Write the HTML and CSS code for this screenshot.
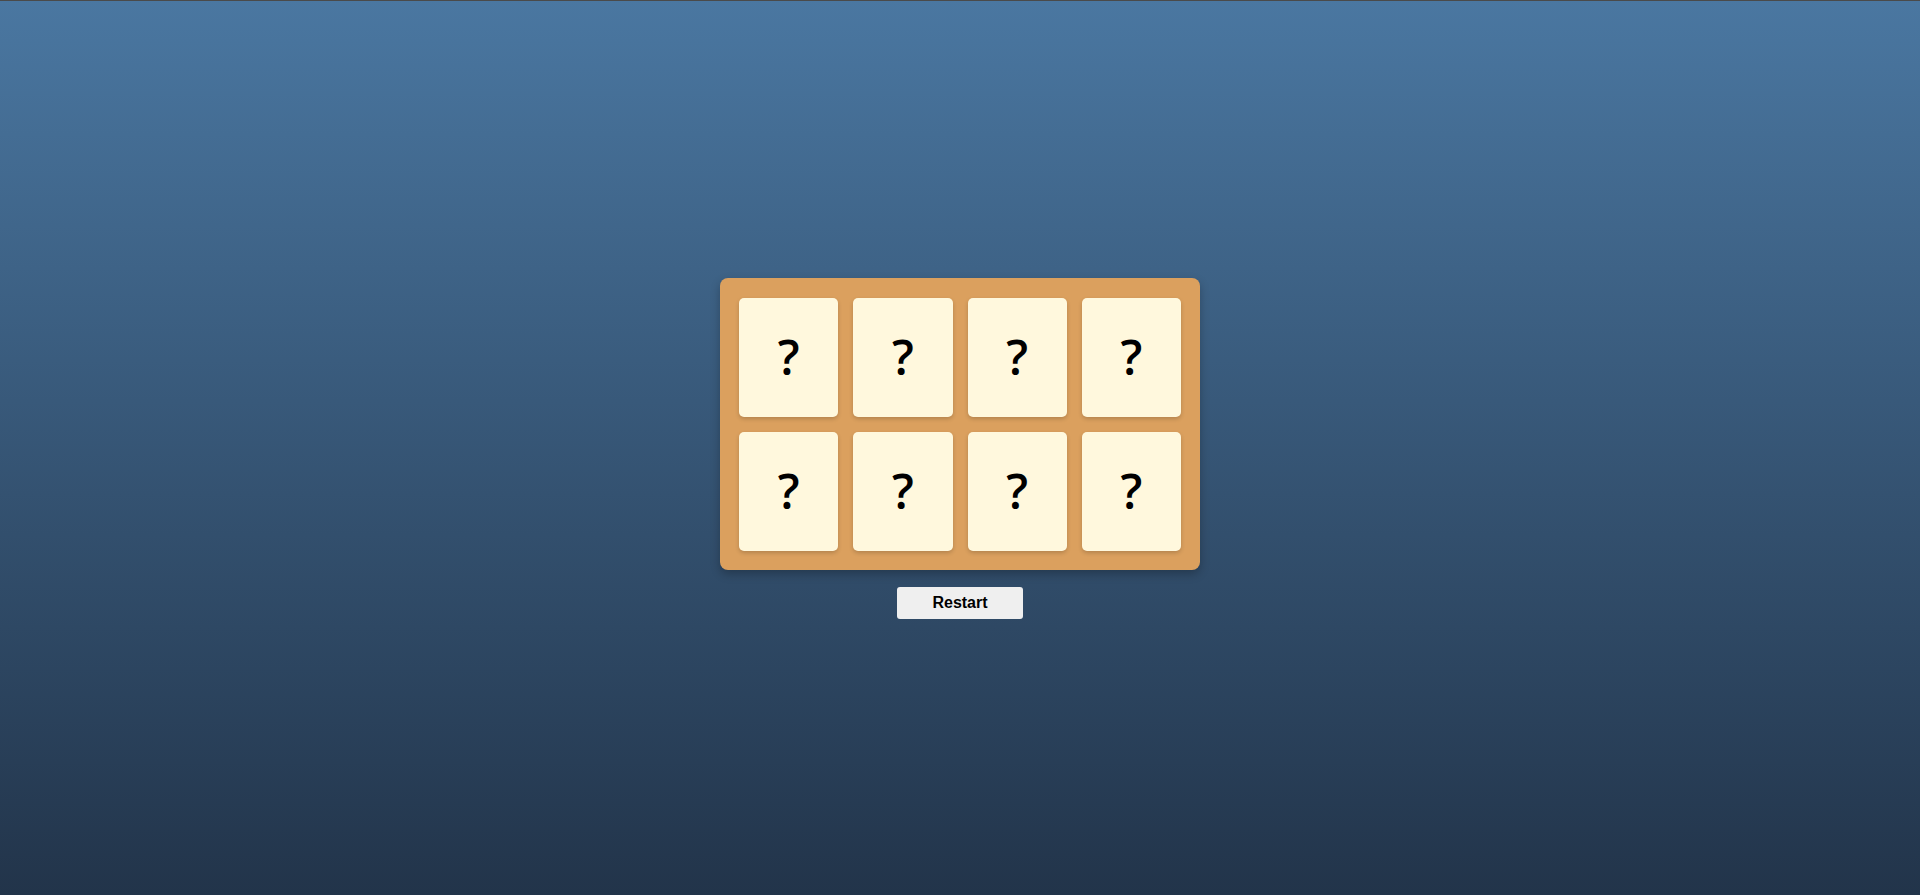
FILE: index.html
```html
<!DOCTYPE html>
<html lang="en">
<head>
<meta charset="utf-8">
<title>Memory Game</title>
<link rel="stylesheet" href="styles.css">
</head>
<body>
<main class="page">
  <div class="board">
    <div class="card">?</div>
    <div class="card">?</div>
    <div class="card">?</div>
    <div class="card">?</div>
    <div class="card">?</div>
    <div class="card">?</div>
    <div class="card">?</div>
    <div class="card">?</div>
  </div>
  <button class="restart" type="button">Restart</button>
</main>
</body>
</html>
```
FILE: styles.css
```css
html, body {
  margin: 0;
  padding: 0;
  height: 100%;
}

body {
  font-family: "Liberation Sans", Arial, sans-serif;
  background: linear-gradient(to bottom, #4a77a1 0%, #22344a 100%);
  border-top: 1px solid #4a4a4a;
  box-sizing: border-box;
}

.page {
  height: 100%;
  display: flex;
  flex-direction: column;
  align-items: center;
  justify-content: center;
  gap: 17px;
}

.board {
  width: 480px;
  box-sizing: border-box;
  padding: 20px 19px 19px;
  background: #dba05e;
  border-radius: 8px;
  box-shadow: 0 4px 10px rgba(0, 0, 0, 0.25);
  display: grid;
  grid-template-columns: repeat(4, 1fr);
  gap: 15px;
}

.card {
  height: 119px;
  background: #fff8dd;
  border-radius: 5px;
  box-shadow: 0 2px 4px rgba(0, 0, 0, 0.18);
  display: flex;
  align-items: center;
  justify-content: center;
  font-family: "Open Sans", "Liberation Sans", sans-serif;
  font-weight: 600;
  font-size: 48px;
  color: #000;
  line-height: 1;
}

.restart {
  width: 126px;
  height: 32px;
  padding: 0;
  border: none;
  border-radius: 3px;
  background: #efefef;
  font-family: "Liberation Sans", Arial, sans-serif;
  font-size: 16px;
  font-weight: bold;
  color: #000;
  cursor: pointer;
}
```
